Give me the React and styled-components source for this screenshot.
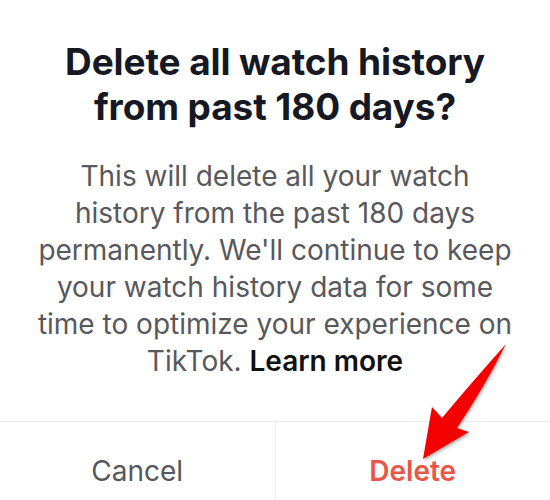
import React from "react";
import styled, { createGlobalStyle } from "styled-components";

const Global = createGlobalStyle`
  html, body { margin: 0; padding: 0; background: #fff; }
  body { font-family: Inter, "Open Sans", sans-serif; overflow: hidden; }
`;

const Dialog = styled.div`
  position: relative;
  width: 550px;
  height: 500px;
  background: #fff;
  display: flex;
  flex-direction: column;
  overflow: hidden;
`;

const Content = styled.div`
  height: 421px;
  flex-shrink: 0;
  box-sizing: border-box;
  padding: 39px 10px 0;
  display: flex;
  flex-direction: column;
  align-items: center;
  text-align: center;
`;

const Title = styled.h1`
  margin: 0;
  font-size: 37px;
  line-height: 45px;
  font-weight: 700;
  color: #161823;
  letter-spacing: -0.1px;
  white-space: nowrap;
`;

const Body = styled.p`
  margin: 29px 0 0;
  font-size: 28px;
  line-height: 37px;
  font-weight: 400;
  color: #58585d;
  white-space: nowrap;
`;

const Link = styled.span`
  font-weight: 600;
  color: #111;
`;

const Footer = styled.div`
  display: flex;
  height: 98px;
  flex-shrink: 0;
  border-top: 1px solid #ececec;
`;

const Action = styled.button`
  flex: 1;
  display: flex;
  align-items: center;
  justify-content: center;
  background: none;
  border: none;
  border-left: ${(p) => (p.$divider ? "1px solid #ececec" : "none")};
  font-family: inherit;
  font-size: 28px;
  font-weight: ${(p) => (p.$danger ? 600 : 400)};
  color: ${(p) => (p.$danger ? "#ea5749" : "#56565b")};
  padding: 0;
`;

const Arrow = styled.svg`
  position: absolute;
  left: 0;
  top: 0;
  pointer-events: none;
`;

export default function App() {
  return (
    <>
      <Global />
      <Dialog>
        <Content>
          <Title>
            Delete all watch history
            <br />
            from past 180 days?
          </Title>
          <Body>
            This will delete all your watch
            <br />
            history from the past 180 days
            <br />
            permanently. We'll continue to keep
            <br />
            your watch history data for some
            <br />
            time to optimize your experience on
            <br />
            TikTok. <Link>Learn more</Link>
          </Body>
        </Content>
        <Footer>
          <Action>Cancel</Action>
          <Action $divider $danger>
            Delete
          </Action>
        </Footer>
        <Arrow width="550" height="500" viewBox="0 0 550 500">
          <defs>
            <filter id="sh" x="-20%" y="-20%" width="140%" height="140%">
              <feDropShadow dx="1" dy="2" stdDeviation="1.5" floodColor="#000" floodOpacity="0.3" />
            </filter>
          </defs>
          <path
            d="M506,344 Q472,382 442,418 L432,407 L423,459 L469,432 L457,428 Q484,388 506,344 Z"
            fill="#f50000"
            filter="url(#sh)"
          />
        </Arrow>
      </Dialog>
    </>
  );
}
